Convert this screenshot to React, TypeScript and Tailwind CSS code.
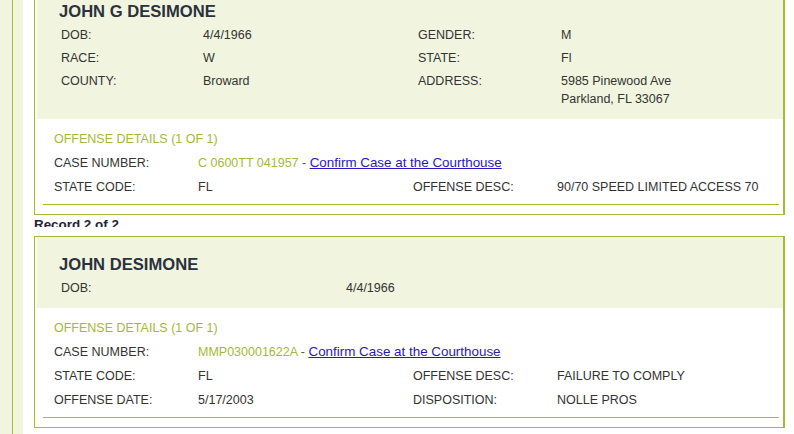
import React from "react";

type Cell = { label: string; value: React.ReactNode };

const olive = "bg-[#a8b932]";

function Field({ label, value }: Cell) {
  return (
    <>
      <div className="pt-[5px] leading-[18px] text-[#333]">{label}</div>
      <div className="pt-[5px] leading-[18px] text-[#333]">{value}</div>
    </>
  );
}

function OffField({ label, value }: Cell) {
  return (
    <>
      <div className="pt-[6px] leading-[18px] text-[#333]">{label}</div>
      <div className="pt-[6px] leading-[18px] text-[#333]">{value}</div>
    </>
  );
}

function CaseValue({ num }: { num: string }) {
  return (
    <span className="whitespace-nowrap">
      <span className="text-[#a6b935]">{num}</span>
      <span className="text-[#555]"> - </span>
      <a href="#" className="text-[13.4px] text-[#2a16c6] underline">
        Confirm Case at the Courthouse
      </a>
    </span>
  );
}

function OffenseBlock({ rows, caseNum }: { rows: Cell[][]; caseNum: string }) {
  return (
    <div className="bg-white pt-[5px] pb-[9px]">
      <div className="pl-[17px]">
        <div className="pt-[6px] leading-[18px] text-[#a6b935]">OFFENSE DETAILS (1 OF 1)</div>
        <div className="flex">
          <div className="w-[144px] pt-[6px] leading-[18px] text-[#333]">CASE NUMBER:</div>
          <div className="pt-[6px] leading-[18px]">
            <CaseValue num={caseNum} />
          </div>
        </div>
        <div className="grid grid-cols-[144px_215px_144px_1fr]">
          {rows.map((pair, i) => (
            <React.Fragment key={i}>
              {pair.map((c) => (
                <OffField key={c.label} label={c.label} value={c.value} />
              ))}
            </React.Fragment>
          ))}
        </div>
      </div>
      <div className={`mt-[8px] ml-[6px] mr-[4px] h-px ${olive}`} />
    </div>
  );
}

export default function App() {
  return (
    <div className="w-[794px] h-[434px] overflow-hidden bg-white flex font-['Liberation_Sans',Arial,sans-serif] text-[12.5px]">
      <div className="w-[12px] shrink-0 bg-[#f1f5df]" />
      <div className={`w-px shrink-0 ${olive}`} />
      <div className="w-[10px] shrink-0 bg-[#f1f5df]" />
      <div className="flex-1 pl-[11px] pr-[9px]">
        {/* record 1 (scrolled, top cut off) */}
        <div className="-mt-[17px] border border-[#a8b932] border-r-2 bg-white pl-[2px]">
          <div className="bg-[#f1f5df] pt-[19px] pb-[11px] pl-[22px]">
            <div className="text-[16.6px] font-bold leading-[18px] text-[#2b313d]">JOHN G DESIMONE</div>
            <div className="pl-[2px] grid grid-cols-[142px_215px_143px_1fr]">
              <Field label="DOB:" value="4/4/1966" />
              <Field label="GENDER:" value="M" />
              <Field label="RACE:" value="W" />
              <Field label="STATE:" value="Fl" />
              <Field label="COUNTY:" value="Broward" />
              <Field
                label="ADDRESS:"
                value={
                  <>
                    5985 Pinewood Ave
                    <br />
                    Parkland, FL 33067
                  </>
                }
              />
            </div>
          </div>
          <OffenseBlock
            caseNum="C 0600TT 041957"
            rows={[
              [
                { label: "STATE CODE:", value: "FL" },
                { label: "OFFENSE DESC:", value: "90/70 SPEED LIMITED ACCESS 70" },
              ],
            ]}
          />
        </div>

        <div className="mt-[2px] h-[10px] overflow-hidden">
          <div className="text-[13.4px] font-bold leading-[16px] text-[#1e2638]">Record 2 of 2</div>
        </div>

        {/* record 2 */}
        <div className="mt-[9px] border border-[#a8b932] border-r-2 bg-white pl-[2px]">
          <div className="bg-[#f1f5df] pt-[19px] pb-[11px] pl-[22px]">
            <div className="text-[16.6px] font-bold leading-[18px] text-[#2b313d]">JOHN DESIMONE</div>
            <div className="pl-[2px] grid grid-cols-[285px_1fr]">
              <Field label="DOB:" value="4/4/1966" />
            </div>
          </div>
          <OffenseBlock
            caseNum="MMP030001622A"
            rows={[
              [
                { label: "STATE CODE:", value: "FL" },
                { label: "OFFENSE DESC:", value: "FAILURE TO COMPLY" },
              ],
              [
                { label: "OFFENSE DATE:", value: "5/17/2003" },
                { label: "DISPOSITION:", value: "NOLLE PROS" },
              ],
            ]}
          />
        </div>
      </div>
    </div>
  );
}
